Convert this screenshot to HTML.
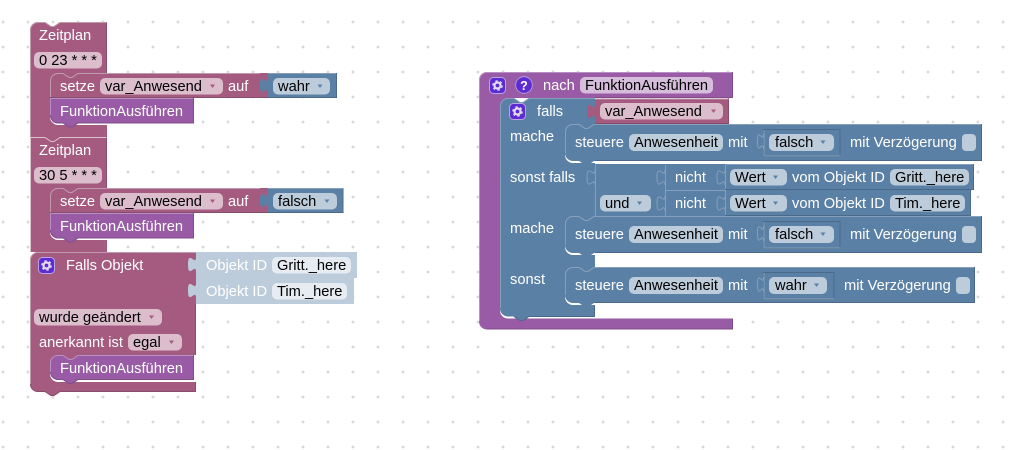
<!DOCTYPE html>
<html><head><meta charset="utf-8">
<style>
html,body{margin:0;padding:0;background:#fff;width:1016px;height:450px;overflow:hidden}
svg{display:block}
text{font-family:"Liberation Sans",sans-serif;font-size:14.67px;fill:#fff;white-space:pre}
text.f{fill:#000}
.p{fill:#a55b80}.u{fill:#995ba5}.b{fill:#5b80a5}
.pp{fill:#dbbdcc}.up{fill:#d6bddb}.bp{fill:#bdccdb}.lp{fill:#e6ecf2}
.ln{fill:none;stroke-width:1}
.pl{stroke:#c09aad}.pd{stroke:#8a4c6b}
.ul{stroke:#b88fc2}.ud{stroke:#7f4c89}
.bl{stroke:#86a0bb}.bd{stroke:#4b6a89}
</style></head><body>
<svg width="1016" height="450" viewBox="0 0 1016 450" xmlns="http://www.w3.org/2000/svg">
<defs>
<pattern id="grid" x="3" y="22" width="25" height="25" patternUnits="userSpaceOnUse">
<path d="M-1.5,0H1.5M0,-1.5V1.5M23.5,0H26.5M25,-1.5V1.5M-1.5,25H1.5M0,23.5V26.5M23.5,25H26.5M25,23.5V26.5" stroke="#ccc" stroke-width="1"/>
</pattern>
<g id="gear">
<rect x=".5" y=".5" width="16" height="16" rx="4" fill="#5c2bd2" stroke="#b9a5e6" stroke-width="1"/>
<circle cx="8.5" cy="8.5" r="3" fill="none" stroke="#e2dcef" stroke-width="2.2"/>
<circle cx="8.5" cy="8.5" r="4.6" fill="none" stroke="#e2dcef" stroke-width="1.4" stroke-dasharray="2.4 2.42"/>
</g>
</defs>
<rect width="1016" height="450" fill="#fff"/>
<rect width="1016" height="450" fill="url(#grid)"/>

<!-- Zeitplan 1 -->
<path class="p" d="M30,30a8,8 0 0 1 8,-8h7l6,4h3l6,-4H107V73H78l-6,4h-3l-6,-4H58a8,8 0 0 0 -8,8V117a8,8 0 0 0 8,8H107V137H30Z"/>
<path class="ln pl" d="M30.500,137V30a7.500,7.500 0 0 1 7.500,-7.500h7l6,4h3l6,-4H107"/>
<path class="ln pd" d="M106.500,22.500V73"/>
<path class="p" d="M50,81a8,8 0 0 1 8,-8h5l6,4h3l6,-4H268V98H50Z"/>
<path class="ln pl" d="M50.500,98V81a7.500,7.500 0 0 1 7.500,-7.500h5l6,4h3l6,-4H260"/>
<path class="ln pd" d="M50,97.500H268"/>
<path class="u" d="M50,98H194V123.500H78l-6,4h-3l-6,-4H58a8,8 0 0 1 -8,-8Z"/>
<path class="ln ul" d="M50.500,115V98.500H193"/>
<path class="ln ud" d="M193.500,98V123H78l-6,4h-3l-6,-4H58a8,8 0 0 1 -7.500,-7.500"/>
<text x="39" y="40">Zeitplan</text>
<rect class="pp" x="34" y="52" width="68" height="16.500" rx="5"/>
<text class="f" x="39" y="65">0 23 * * *</text>
<text x="60" y="91">setze</text>
<rect class="pp" x="100" y="78" width="123" height="16.500" rx="5"/>
<text class="f" x="105" y="91">var_Anwesend</text>
<path class="p" d="M210,84.500h5l-2.500,3.500Z"/>
<text x="228" y="91">auf</text>
<text x="60" y="116">FunktionAusführen</text>
<path class="b" d="M268,73H337V98H268Z"/>
<path class="b" d="M268,78c0,10 -8,-8 -8,7.500s8,-2.500 8,7.500Z"/>
<path class="ln bd" d="M268,97.500H336.500V73"/>
<path class="ln bl" d="M268,73.500H336"/>
<rect class="bp" x="273" y="78" width="57" height="16.500" rx="5"/>
<text class="f" x="278" y="91">wahr</text>
<path class="b" d="M317.500,84.500h5l-2.500,3.500Z"/>

<!-- Zeitplan 2 -->
<g transform="translate(0,115)">
<path class="p" d="M30,22H45l6,4h3l6,-4H107V73H78l-6,4h-3l-6,-4H58a8,8 0 0 0 -8,8V117a8,8 0 0 0 8,8H107V137H30Z"/>
<path class="p" d="M45,18h15v9h-15Z"/>
<path class="ln" stroke="#dcc4d1" d="M30.500,137V22.500H45l6,4h3l6,-4H107"/>
<path class="ln pd" d="M106.500,22.500V73"/>
<path class="p" d="M50,81a8,8 0 0 1 8,-8h5l6,4h3l6,-4H268V98H50Z"/>
<path class="ln pl" d="M50.500,98V81a7.500,7.500 0 0 1 7.500,-7.500h5l6,4h3l6,-4H260"/>
<path class="ln pd" d="M50,97.500H268"/>
<path class="u" d="M50,98H194V123.500H78l-6,4h-3l-6,-4H58a8,8 0 0 1 -8,-8Z"/>
<path class="ln ul" d="M50.500,115V98.500H193"/>
<path class="ln ud" d="M193.500,98V123H78l-6,4h-3l-6,-4H58a8,8 0 0 1 -7.500,-7.500"/>
<text x="39" y="40">Zeitplan</text>
<rect class="pp" x="34" y="52" width="68" height="16.500" rx="5"/>
<text class="f" x="39" y="65">30 5 * * *</text>
<text x="60" y="91">setze</text>
<rect class="pp" x="100" y="78" width="123" height="16.500" rx="5"/>
<text class="f" x="105" y="91">var_Anwesend</text>
<path class="p" d="M210,84.500h5l-2.500,3.500Z"/>
<text x="228" y="91">auf</text>
<text x="60" y="116">FunktionAusführen</text>
<path class="b" d="M268,73H343.500V98H268Z"/>
<path class="b" d="M268,78c0,10 -8,-8 -8,7.500s8,-2.500 8,7.500Z"/>
<path class="ln bd" d="M268,97.500H343V73"/>
<path class="ln bl" d="M268,73.500H343"/>
<rect class="bp" x="273" y="78" width="64" height="16.500" rx="5"/>
<text class="f" x="278" y="91">falsch</text>
<path class="b" d="M324.500,84.500h5l-2.500,3.500Z"/>
</g>

<!-- Falls Objekt -->
<path class="p" d="M30,260a8,8 0 0 1 8,-8H196V355H78l-6,4h-3l-6,-4H58a8,8 0 0 0 -8,8V374a8,8 0 0 0 8,8H196V392H60l-6,4h-3l-6,-4H38a8,8 0 0 1 -8,-8Z"/>
<path class="ln pl" d="M30.500,384V260a7.500,7.500 0 0 1 7.500,-7.500H196"/>
<path class="ln pd" d="M30.500,384a7.500,7.500 0 0 0 7.500,7.500H45l6,4h3l6,-4H195.500V382M195.500,304V355"/>
<path class="u" d="M50,363a8,8 0 0 1 8,-8h5l6,4h3l6,-4H194V380H78l-6,4h-3l-6,-4H58a8,8 0 0 1 -8,-8Z"/>
<path class="ln ul" d="M50.500,372V363a7.500,7.500 0 0 1 7.500,-7.500h5l6,4h3l6,-4H193"/>
<path class="ln ud" d="M193.500,355V379.500H78l-6,4h-3l-6,-4H58a8,8 0 0 1 -7.500,-7.500"/>
<use href="#gear" x="38" y="257"/>
<text x="66" y="270">Falls Objekt</text>
<rect class="pp" x="34" y="309" width="128" height="16.500" rx="5"/>
<text class="f" x="39" y="322">wurde geändert</text>
<path class="p" d="M149,315.500h5l-2.500,3.500Z"/>
<text x="39" y="347">anerkannt ist</text>
<rect class="pp" x="128" y="334" width="54" height="16.500" rx="5"/>
<text class="f" x="133" y="347">egal</text>
<path class="p" d="M169,340.500h5l-2.500,3.500Z"/>
<text x="60" y="373">FunktionAusführen</text>

<path class="bp" d="M196,252H357V278H354V304H196Z"/>
<path class="bp" d="M196,257c0,10 -8,-8 -8,7.500s8,-2.500 8,7.500Z"/>
<path class="bp" d="M196,283c0,10 -8,-8 -8,7.500s8,-2.500 8,7.500Z"/>
<text x="206" y="270">Objekt ID</text>
<rect class="lp" x="272" y="257" width="79" height="16.500" rx="5"/>
<text class="f" x="277" y="270">Gritt._here</text>
<text x="206" y="296">Objekt ID</text>
<rect class="lp" x="272" y="283" width="75" height="16.500" rx="5"/>
<text class="f" x="277" y="296">Tim._here</text>

<!-- nach -->
<path class="u" d="M479,80a8,8 0 0 1 8,-8H733V98H508a8,8 0 0 0 -8,8V310a8,8 0 0 0 8,8.500H733V329.500H487a8,8 0 0 1 -8,-8Z"/>
<path class="ln ul" d="M479.500,321V80a7.500,7.500 0 0 1 7.500,-7.500H733"/>
<path class="ln ud" d="M732.500,72V97.500H595M487,329H732.500V319"/>
<use href="#gear" x="489" y="77"/>
<circle cx="524" cy="85" r="8.300" fill="#5c2bd2" stroke="#b9a5e6" stroke-width=".8"/>
<text x="524" y="90" text-anchor="middle" style="font-size:12.500px;font-weight:bold">?</text>
<text x="543" y="90">nach</text>
<rect class="up" x="580" y="77" width="133" height="16.500" rx="5"/>
<text class="f" x="585" y="90">FunktionAusführen</text>

<!-- falls -->
<path class="b" d="M500,106a8,8 0 0 1 8,-8h6l6,4h3l6,-4H595V124H594l-6,4h-3l-6,-4H573a8,8 0 0 0 -8,8V155a8,8 0 0 0 8,8H595V216H594l-6,4h-3l-6,-4H573a8,8 0 0 0 -8,8V247a8,8 0 0 0 8,8H595V267H594l-6,4h-3l-6,-4H573a8,8 0 0 0 -8,8V297a8,8 0 0 0 8,8H595V316.500H529l-6,4h-3l-6,-4H508a8,8 0 0 1 -8,-8Z"/>
<path class="ln bl" d="M500.500,308V106a7.500,7.500 0 0 1 7.500,-7.500h6l6,4h3l6,-4H595"/>
<path class="ln bd" d="M514,316.500l6,4h3l6,-4H594.500V305"/>
<use href="#gear" x="509" y="103"/>
<text x="537" y="116">falls</text>
<text x="510" y="141">mache</text>
<text x="510" y="182">sonst falls</text>
<text x="510" y="233">mache</text>
<text x="510" y="284">sonst</text>

<!-- var block -->
<path class="p" d="M595,98.500H729V124H595Z"/>
<path class="p" d="M595,104c0,10 -8,-8 -8,7.500s8,-2.500 8,7.500Z"/>
<path class="ln pd" d="M595,123.500H728.500V98"/>
<path class="ln pl" d="M595,99H729"/>
<rect class="pp" x="600" y="103" width="123" height="16.500" rx="5"/>
<text class="f" x="605" y="116">var_Anwesend</text>
<path class="p" d="M711,109.500h5l-2.500,3.500Z"/>

<!-- steuere 1 -->
<path class="b" d="M565,132a8,8 0 0 1 8,-8h6l6,4h3l6,-4H982V161H594l-6,4h-3l-6,-4H573a8,8 0 0 1 -8,-8Z"/>
<path class="ln bl" d="M565.500,153V132a7.500,7.500 0 0 1 7.500,-7.500h6l6,4h3l6,-4H982"/>
<path class="ln bd" d="M981.500,124V160.500H595"/>
<text x="575" y="147">steuere</text>
<rect class="bp" x="629" y="134" width="94" height="17" rx="5"/>
<text class="f" x="634" y="147">Anwesenheit</text>
<text x="728" y="147">mit</text>
<path class="ln bd" d="M763.500,129.500H840V156.500H763.500Z"/>
<path class="ln bl" d="M764,130V156H840.500M763.500,134c0,10 -6,-8 -6,7.500s6,-2.500 6,7.500"/>
<rect class="bp" x="769" y="134" width="65" height="17" rx="5"/>
<text class="f" x="775" y="147">falsch</text>
<path class="b" d="M820.500,140.500h5l-2.500,3.500Z"/>
<text x="850" y="147">mit Verzögerung</text>
<rect class="bp" x="962" y="134" width="14" height="17" rx="4"/>

<!-- sonst falls row -->
<path class="b" d="M595,164H974V190H971V216H595Z"/>
<path class="ln bl" d="M595.500,164.500V216M595,170c0,10 -8,-8 -8,7.500s8,-2.500 8,7.500"/>
<rect class="bp" x="600" y="195" width="51" height="16.500" rx="5"/>
<text class="f" x="605" y="208">und</text>
<path class="b" d="M637,201.500h5l-2.500,3.500Z"/>
<path class="ln bl" d="M665.500,165V216M665,190.500H725M665,170c0,10 -8,-8 -8,7.500s8,-2.500 8,7.500M665,196c0,10 -8,-8 -8,7.500s8,-2.500 8,7.500"/>
<text x="675" y="182">nicht</text>
<text x="675" y="208">nicht</text>
<path class="ln bl" d="M725.500,165V216M725,170c0,10 -8,-8 -8,7.500s8,-2.500 8,7.500M725,196c0,10 -8,-8 -8,7.500s8,-2.500 8,7.500"/>
<path class="ln bl" d="M725.500,164.500H974"/>
<path class="ln bd" d="M725,189.500H973.500V164M725,215.500H970.500V190"/>
<rect class="bp" x="730" y="169" width="57" height="16.500" rx="5"/>
<text class="f" x="735" y="182">Wert</text>
<path class="b" d="M773,175.500h5l-2.500,3.500Z"/>
<text x="792" y="182">vom Objekt ID</text>
<rect class="bp" x="890" y="169" width="79" height="16.500" rx="5"/>
<text class="f" x="895" y="182">Gritt._here</text>
<rect class="bp" x="730" y="195" width="57" height="16.500" rx="5"/>
<text class="f" x="735" y="208">Wert</text>
<path class="b" d="M773,201.500h5l-2.500,3.500Z"/>
<text x="792" y="208">vom Objekt ID</text>
<rect class="bp" x="890" y="195" width="75" height="16.500" rx="5"/>
<text class="f" x="895" y="208">Tim._here</text>

<!-- steuere 2 -->
<g transform="translate(0,92)">
<path class="b" d="M565,132a8,8 0 0 1 8,-8h6l6,4h3l6,-4H982V161H594l-6,4h-3l-6,-4H573a8,8 0 0 1 -8,-8Z"/>
<path class="ln bl" d="M565.500,153V132a7.500,7.500 0 0 1 7.500,-7.500h6l6,4h3l6,-4H982"/>
<path class="ln bd" d="M981.500,124V160.500H595"/>
<text x="575" y="147">steuere</text>
<rect class="bp" x="629" y="134" width="94" height="17" rx="5"/>
<text class="f" x="634" y="147">Anwesenheit</text>
<text x="728" y="147">mit</text>
<path class="ln bd" d="M763.500,129.500H840V156.500H763.500Z"/>
<path class="ln bl" d="M764,130V156H840.500M763.500,134c0,10 -6,-8 -6,7.500s6,-2.500 6,7.500"/>
<rect class="bp" x="769" y="134" width="65" height="17" rx="5"/>
<text class="f" x="775" y="147">falsch</text>
<path class="b" d="M820.500,140.500h5l-2.500,3.500Z"/>
<text x="850" y="147">mit Verzögerung</text>
<rect class="bp" x="962" y="134" width="14" height="17" rx="4"/>
</g>

<!-- steuere 3 -->
<g transform="translate(0,143)">
<path class="b" d="M565,132a8,8 0 0 1 8,-8h6l6,4h3l6,-4H975V160H594l-6,4h-3l-6,-4H573a8,8 0 0 1 -8,-8Z"/>
<path class="ln bl" d="M565.500,152V132a7.500,7.500 0 0 1 7.500,-7.500h6l6,4h3l6,-4H975"/>
<path class="ln bd" d="M974.500,124V159.500H595"/>
<text x="575" y="147">steuere</text>
<rect class="bp" x="629" y="134" width="94" height="17" rx="5"/>
<text class="f" x="634" y="147">Anwesenheit</text>
<text x="728" y="147">mit</text>
<path class="ln bd" d="M763.500,129.500H834V156.500H763.500Z"/>
<path class="ln bl" d="M764,130V156H834.500M763.500,134c0,10 -6,-8 -6,7.500s6,-2.500 6,7.500"/>
<rect class="bp" x="769" y="134" width="58" height="17" rx="5"/>
<text class="f" x="775" y="147">wahr</text>
<path class="b" d="M814,140.500h5l-2.500,3.500Z"/>
<text x="844" y="147">mit Verzögerung</text>
<rect class="bp" x="956" y="134" width="14" height="17" rx="4"/>
</g>
</svg>
</body></html>
